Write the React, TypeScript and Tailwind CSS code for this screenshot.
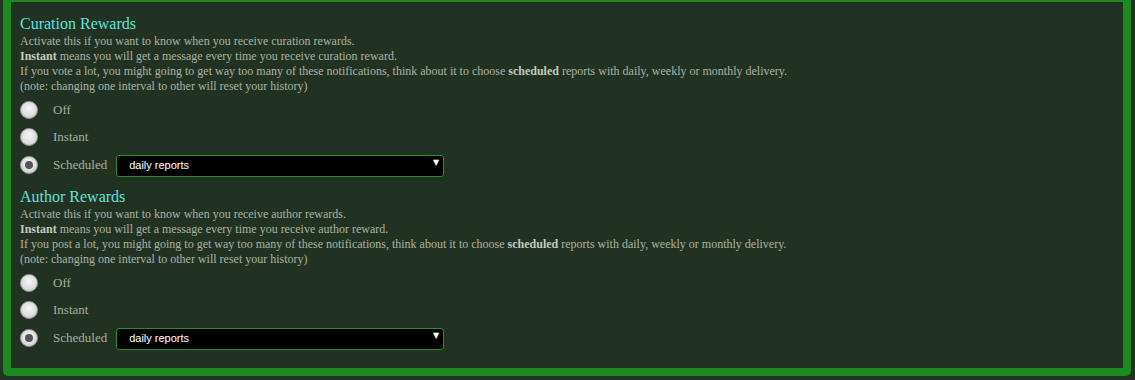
import { useState } from "react";

type Mode = "off" | "instant" | "scheduled";

type Section = {
  key: string;
  title: string;
  intro: string;
  instant: string;
  lot: string;
};

const SECTIONS: Section[] = [
  {
    key: "curation",
    title: "Curation Rewards",
    intro: "Activate this if you want to know when you receive curation rewards.",
    instant: " means you will get a message every time you receive curation reward.",
    lot: "If you vote a lot, you might going to get way too many of these notifications, think about it to choose ",
  },
  {
    key: "author",
    title: "Author Rewards",
    intro: "Activate this if you want to know when you receive author rewards.",
    instant: " means you will get a message every time you receive author reward.",
    lot: "If you post a lot, you might going to get way too many of these notifications, think about it to choose ",
  },
];

export default function App() {
  const [modes, setModes] = useState<Record<string, Mode>>({
    curation: "scheduled",
    author: "scheduled",
  });

  return (
    <div
      className="min-h-[380px] bg-[#243224] pl-[3px] pr-[4px] pb-[5px]"
      style={{ fontFamily: '"Liberation Serif", serif' }}
    >
      <div className="flex flex-col gap-[8px] rounded-b-[5px] border-x-8 border-b-8 border-t-2 border-[#1b8b20] bg-[#223222] pl-[9px] pr-4 pt-[12px] pb-[16px]">
        {SECTIONS.map(s => (
          <RewardSection
            key={s.key}
            section={s}
            mode={modes[s.key]}
            onChange={m => setModes(prev => ({ ...prev, [s.key]: m }))}
          />
        ))}
      </div>
    </div>
  );
}

function RewardSection({
  section,
  mode,
  onChange,
}: {
  section: Section;
  mode: Mode;
  onChange: (m: Mode) => void;
}) {
  return (
    <div>
      <h2 className="text-[16px] leading-[20px] text-[#5fe3db]">{section.title}</h2>
      <div className="text-[12px] leading-[15px] text-[#a9b3a5]">
        <p>{section.intro}</p>
        <p>
          <b className="text-[#c2cabe]">Instant</b>
          {section.instant}
        </p>
        <p>
          {section.lot}
          <b className="text-[#c2cabe]">scheduled</b> reports with daily, weekly or monthly delivery.
        </p>
        <p>(note: changing one interval to other will reset your history)</p>
      </div>

      <div className="mt-[2px] flex flex-col">
        <RadioRow label="Off" checked={mode === "off"} onClick={() => onChange("off")} />
        <RadioRow label="Instant" checked={mode === "instant"} onClick={() => onChange("instant")} />
        <RadioRow label="Scheduled" checked={mode === "scheduled"} onClick={() => onChange("scheduled")} tall>
          <div className="relative ml-[9px] w-[328px]">
            <select
              className="h-[22px] w-full appearance-none rounded-[3px] border border-[#2f8a32] bg-black pl-3 text-[11px] text-white"
              style={{ fontFamily: '"Liberation Sans", sans-serif' }}
              defaultValue="daily"
            >
              <option value="daily">daily reports</option>
              <option value="weekly">weekly reports</option>
              <option value="monthly">monthly reports</option>
            </select>
            <span
              className="pointer-events-none absolute right-[5px] top-[7px] text-[8px] leading-[8px] text-white"
              style={{ fontFamily: '"DejaVu Sans", sans-serif' }}
            >
              ▼
            </span>
          </div>
        </RadioRow>
      </div>
    </div>
  );
}

function RadioRow({
  label,
  checked,
  onClick,
  tall,
  children,
}: {
  label: string;
  checked: boolean;
  onClick: () => void;
  tall?: boolean;
  children?: React.ReactNode;
}) {
  return (
    <div className={tall ? "flex h-[29px] items-center" : "flex h-[27px] items-center"}>
      <button
        onClick={onClick}
        className="flex h-[18px] w-[18px] items-center justify-center rounded-full border border-[#9a9a9a] bg-[radial-gradient(circle_at_50%_40%,#f6f6f6,#dcdcdc_60%,#bdbdbd)]"
      >
        {checked && <span className="h-[8px] w-[8px] rounded-full bg-[#555]" />}
      </button>
      <span className="ml-[15px] text-[13px] text-[#a3b09f]">{label}</span>
      {children}
    </div>
  );
}
